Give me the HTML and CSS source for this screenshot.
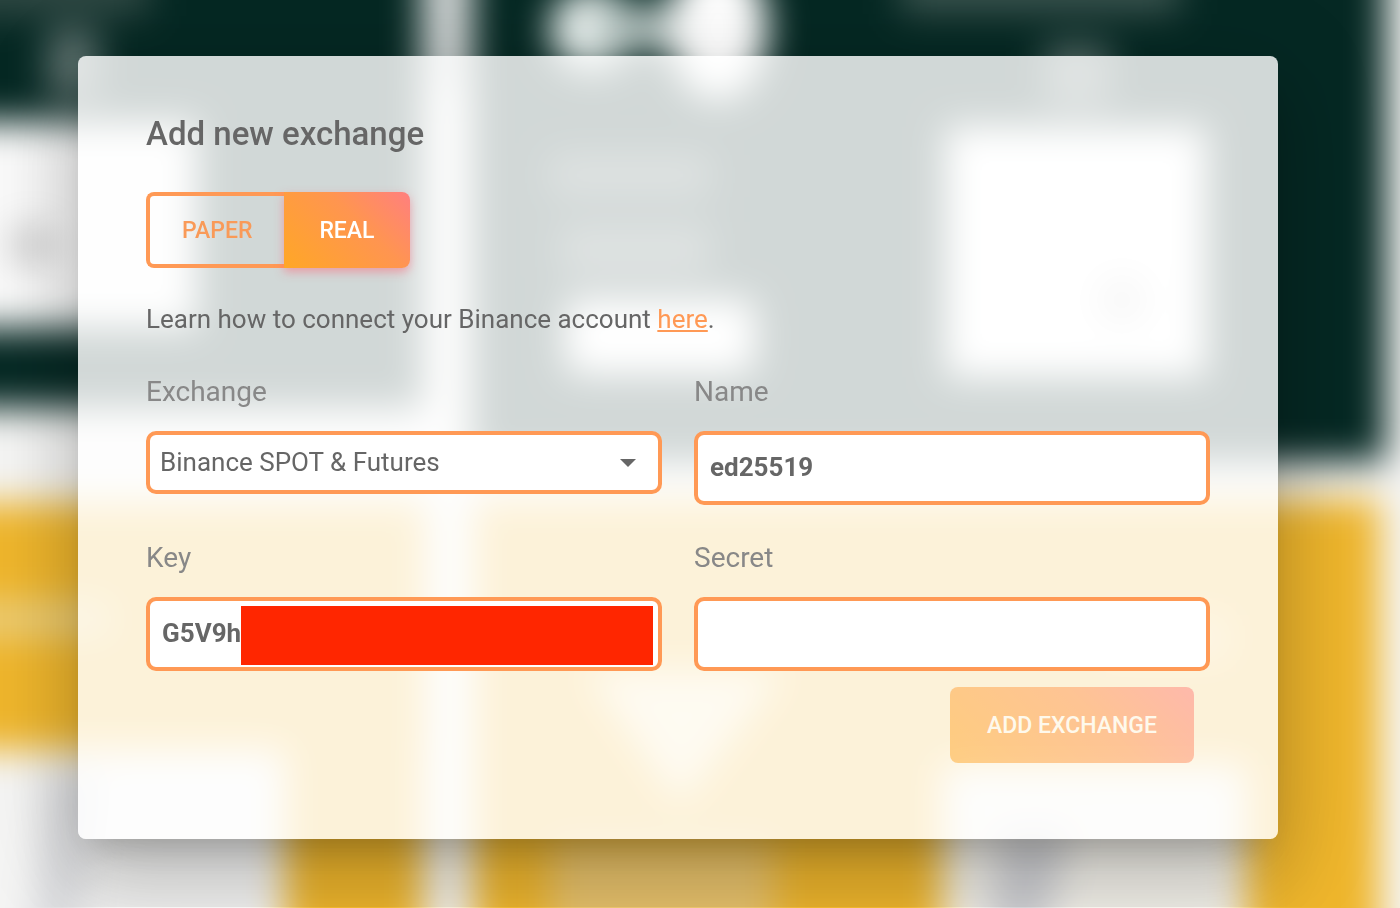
FILE: index.html
```html
<!DOCTYPE html>
<html lang="en">
<head>
    <meta charset="UTF-8">
    <meta name="viewport" content="width=device-width, initial-scale=1.0">
    <title>Add new exchange</title>
    <link rel="stylesheet" href="styles.css">
</head>
<body>

    <!-- blurred page behind the dialog -->
    <svg class="backdrop" viewBox="0 0 1400 908" preserveAspectRatio="none" aria-hidden="true">
        <defs>
            <filter id="blur" filterUnits="userSpaceOnUse" x="-100" y="-100" width="1600" height="1108" color-interpolation-filters="sRGB">
                <feGaussianBlur stdDeviation="18" />
            </filter>
        </defs>
        <g filter="url(#blur)">
            <rect x="-100" y="-100" width="1600" height="1108" fill="#f5f5f4" />
            <rect x="425" y="-100" width="45" height="190" fill="#d8dbdb" />
            <rect x="-100" y="-100" width="522" height="508" fill="#052823" />
            <rect x="472" y="-100" width="914" height="562" fill="#052823" />
            <rect x="-100" y="122" width="297" height="206" fill="#fafafa" />
            <ellipse cx="32" cy="245" rx="24" ry="20" fill="#cccccc" />
            <rect x="-100" y="-100" width="250" height="116" fill="#2f4843" />
            <rect x="48" y="30" width="50" height="70" fill="#5f726f" />
            <circle cx="592" cy="30" r="42" fill="#f4fbf9" />
            <rect x="592" y="8" width="130" height="42" fill="#bccac7" />
            <ellipse cx="718" cy="28" rx="50" ry="72" fill="#ffffff" />
            <rect x="550" y="155" width="160" height="40" fill="#4c635f" />
            <rect x="560" y="225" width="150" height="50" fill="#4c635f" />
            <rect x="565" y="299" width="190" height="75" rx="14" fill="#ffffff" />
            <rect x="946" y="127" width="260" height="250" fill="#ffffff" />
            <ellipse cx="1122" cy="300" rx="24" ry="24" fill="#d0d0d0" />
            <rect x="900" y="-40" width="280" height="54" fill="#3a534e" />
            <rect x="1045" y="45" width="65" height="62" fill="#556a66" />
            <rect x="-100" y="503" width="525" height="247" fill="#efb62c" />
            <rect x="-100" y="602" width="210" height="34" fill="#ecd080" />
            <rect x="285" y="503" width="138" height="500" fill="#efb62c" />
            <rect x="474" y="500" width="906" height="500" fill="#efb62c" />
            <rect x="550" y="840" width="225" height="160" fill="#e9c36c" />
            <path d="M585 670 H785 L680 805 Z" fill="#fae6b4" />
            <rect x="1100" y="615" width="130" height="45" fill="#f3cc70" />
            <rect x="942" y="765" width="304" height="300" fill="#f5f3ec" />
            <path d="M1000 830 H1070 L1030 1000 H980 Z" fill="#cfd0d4" />
            <path d="M50 770 H100 L70 1000 H20 Z" fill="#dcdde0" />
        </g>
    </svg>

    <div class="dialog">
        <h1>Add new exchange</h1>

        <div class="switch">
            <button type="button" class="switch-btn">PAPER</button>
            <button type="button" class="switch-btn active">REAL</button>
        </div>

        <p class="hint">Learn how to connect your Binance account <a href="#">here</a>.</p>

        <form>
            <div class="fields">
                <div class="field">
                    <label for="exchange">Exchange</label>
                    <div class="control">
                        <select id="exchange">
                            <option>Binance SPOT &amp; Futures</option>
                        </select>
                        <svg class="arrow" viewBox="0 0 16 8" aria-hidden="true"><path d="M0 0 H16 L8 8 Z" /></svg>
                    </div>
                </div>
                <div class="field">
                    <label for="name">Name</label>
                    <input type="text" id="name" value="ed25519">
                </div>
                <div class="field">
                    <label for="key">Key</label>
                    <div class="control">
                        <input type="text" id="key" value="G5V9h">
                        <span class="cover"></span>
                    </div>
                </div>
                <div class="field">
                    <label for="secret">Secret</label>
                    <input type="password" id="secret">
                </div>
            </div>

            <div class="actions">
                <button type="submit" class="submit" disabled>ADD EXCHANGE</button>
            </div>
        </form>
    </div>

</body>
</html>
```
FILE: styles.css
```css
* {
    box-sizing: border-box;
}

body {
    margin: 0;
    padding: 56px 122px 68px 78px;
    font-family: Roboto, "Liberation Sans", sans-serif;
    font-size: 26px;
    line-height: 32px;
    color: #666;
}

.backdrop {
    position: fixed;
    top: 0;
    left: 0;
    width: 100%;
    height: 100%;
}

.dialog {
    position: relative;
    padding: 58px 68px 76px;
    background-color: rgba(255, 255, 255, 0.82);
    border-radius: 8px;
    box-shadow: 0 22px 30px -14px rgba(0, 0, 0, 0.2),
        0 48px 76px 6px rgba(0, 0, 0, 0.14),
        0 18px 92px 16px rgba(0, 0, 0, 0.12);
}

h1 {
    margin: 0 0 38px;
    font-size: 33px;
    font-weight: 500;
    line-height: 40px;
}

button,
input,
select {
    font-family: inherit;
    color: inherit;
}

.switch {
    display: flex;
}

.switch-btn,
.submit {
    height: 76px;
    padding: 0 37px;
    border: none;
    border-radius: 8px;
    font-size: 23px;
    font-weight: 500;
    cursor: pointer;
}

.switch-btn {
    padding: 0 32px;
    border: 4px solid #ff9955;
    border-right: none;
    border-radius: 8px 0 0 8px;
    background: none;
    color: #f99a58;
}

.switch-btn.active {
    padding: 0 35px;
    border: none;
    border-radius: 0 8px 8px 0;
    background: linear-gradient(45deg, #ffa726, #ff9550 60%, #ff7f7f);
    color: #fff;
    box-shadow: 0 4px 10px rgba(255, 100, 120, 0.5);
}

.hint {
    margin: 35px 0 41px;
}

.hint a {
    color: #ff9955;
}

.fields {
    display: grid;
    grid-template-columns: 1fr 1fr;
    gap: 37px 32px;
}

label {
    display: block;
    margin-bottom: 23px;
    font-size: 28px;
    color: #888;
}

.control {
    position: relative;
}

input,
select {
    display: block;
    width: 100%;
    height: 74px;
    padding: 0 12px 2px;
    border: 4px solid #ff9955;
    border-radius: 10px;
    background-color: #fff;
    font-size: 26px;
    font-weight: bold;
}

select {
    height: 63px;
    padding: 0 10px 2px;
    font-weight: normal;
    appearance: none;
}

.arrow {
    position: absolute;
    top: 28px;
    right: 26px;
    width: 16px;
    height: 8px;
    fill: #666;
    pointer-events: none;
}

.cover {
    position: absolute;
    top: 9px;
    right: 9px;
    bottom: 6px;
    left: 95px;
    background-color: #ff2600;
}

.actions {
    display: flex;
    justify-content: flex-end;
    padding: 16px 16px 0 0;
}

.submit {
    background: linear-gradient(45deg, #ffa726, #ff9550 60%, #ff7f7f);
    color: #fff;
    opacity: 0.5;
}
```
